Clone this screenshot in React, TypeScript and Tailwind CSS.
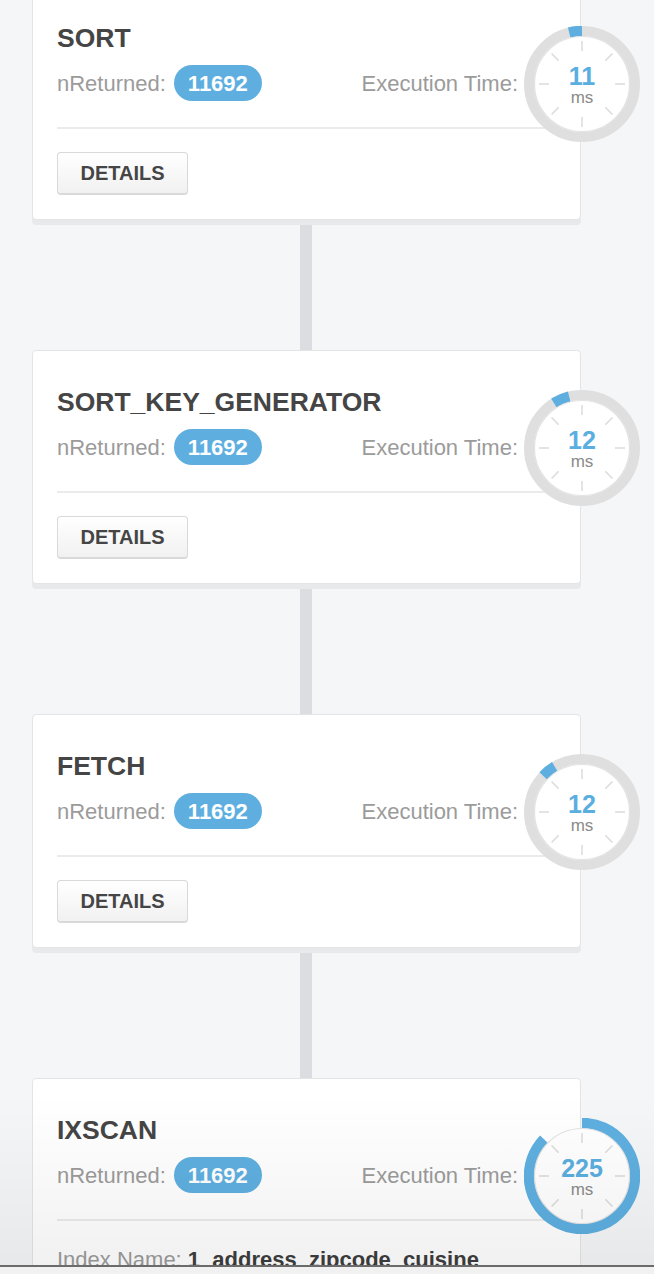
import React from "react";

type Stage = {
  name: string;
  returned: string;
  ms: string;
  arc: [number, number];
  track: boolean;
  index?: string;
};

const stages: Stage[] = [
  { name: "SORT", returned: "11692", ms: "11", arc: [346, 360], track: true },
  { name: "SORT_KEY_GENERATOR", returned: "11692", ms: "12", arc: [328, 346], track: true },
  { name: "FETCH", returned: "11692", ms: "12", arc: [313, 329], track: true },
  { name: "IXSCAN", returned: "11692", ms: "225", arc: [0, 314], track: false, index: "1_address_zipcode_cuisine" },
];

function point(deg: number, r: number) {
  const a = (deg * Math.PI) / 180;
  return [58 + r * Math.sin(a), 58 - r * Math.cos(a)];
}

function arcPath(start: number, end: number, r: number) {
  const [x1, y1] = point(start, r);
  const [x2, y2] = point(end, r);
  const large = end - start > 180 ? 1 : 0;
  return `M ${x1} ${y1} A ${r} ${r} 0 ${large} 1 ${x2} ${y2}`;
}

function Clock({ ms, arc, track }: { ms: string; arc: [number, number]; track: boolean }) {
  const ticks = [0, 45, 90, 135, 180, 225, 270, 315];
  return (
    <div className="absolute left-[491px] top-[39px] h-[116px] w-[116px]">
      <svg width="116" height="116" viewBox="0 0 116 116" className="absolute inset-0">
        {track && <circle cx="58" cy="58" r="53" fill="none" stroke="#dfdfdf" strokeWidth="10" />}
        <path d={arcPath(arc[0], arc[1], 53)} fill="none" stroke="#5eafe0" strokeWidth="10.5" />
        <circle cx="58" cy="58" r="47.5" fill="#ffffff" stroke="#e2e2e2" strokeWidth="1.2" />
        {ticks.map((t) => {
          const [x1, y1] = point(t, 33);
          const [x2, y2] = point(t, 43);
          return <line key={t} x1={x1} y1={y1} x2={x2} y2={y2} stroke="#d9d9d9" strokeWidth="1.4" />;
        })}
      </svg>
      <div className="absolute left-0 right-0 top-[38px] text-center text-[25px] font-bold leading-[24px] text-[#5aaee0]">
        {ms}
      </div>
      <div className="absolute left-0 right-0 top-[62px] text-center text-[17px] leading-[20px] text-[#8a8a8a]">
        ms
      </div>
    </div>
  );
}

function StageCard({ stage }: { stage: Stage }) {
  return (
    <div className="relative h-[234px] w-[549px] rounded-[4px] border border-[#e3e4e6] bg-white px-6 pt-9 shadow-[0_5px_0_#e8e9eb]">
      <div className="text-[26.5px] font-bold leading-[30px] text-[#454545]">{stage.name}</div>

      <div className="mt-3 flex h-9 items-center justify-between pr-[38px] text-[22px] text-[#9b9b9b]">
        <div className="flex items-center gap-2">
          <span>nReturned:</span>
          <span className="flex h-9 items-center rounded-full bg-[#5eafe0] px-[14px] font-bold text-white">
            {stage.returned}
          </span>
        </div>
        <span>Execution Time:</span>
      </div>

      <div className="mt-[26px] h-[2px] bg-[#ebebeb]" />

      {stage.index ? (
        <div className="mt-[26px] text-[22px] leading-[26px] text-[#9b9b9b]">
          Index Name: <span className="font-bold text-[#3d3d3d]">{stage.index}</span>
        </div>
      ) : (
        <button className="mt-[23px] flex h-[43px] w-[131px] items-center justify-center rounded-[4px] border border-b-2 border-[#d9d9d9] bg-linear-to-b from-white to-[#f1f1f1] text-[20px] font-bold text-[#454545]">
          DETAILS
        </button>
      )}

      <Clock ms={stage.ms} arc={stage.arc} track={stage.track} />
    </div>
  );
}

export default function App() {
  return (
    <div className="relative h-[1274px] w-[654px] overflow-hidden bg-[#f5f6f8] font-['Liberation_Sans',Arial,sans-serif]">
      <div className="-mt-[14px] flex flex-col items-start pl-8">
        {stages.map((s, i) => (
          <React.Fragment key={s.name}>
            <StageCard stage={s} />
            {i < stages.length - 1 && <div className="ml-[268px] h-[130px] w-3 bg-[#dcdde1]" />}
          </React.Fragment>
        ))}
      </div>

      {/* bottom fade + window edge */}
      <div className="pointer-events-none absolute bottom-0 left-0 right-0 flex flex-col">
        <div className="h-[170px] bg-linear-to-b from-transparent to-[rgba(0,0,0,0.055)]" />
        <div className="h-[2px] bg-[#6b6b6b]" />
        <div className="h-[7px] bg-[#f1f1f1]" />
      </div>
    </div>
  );
}
